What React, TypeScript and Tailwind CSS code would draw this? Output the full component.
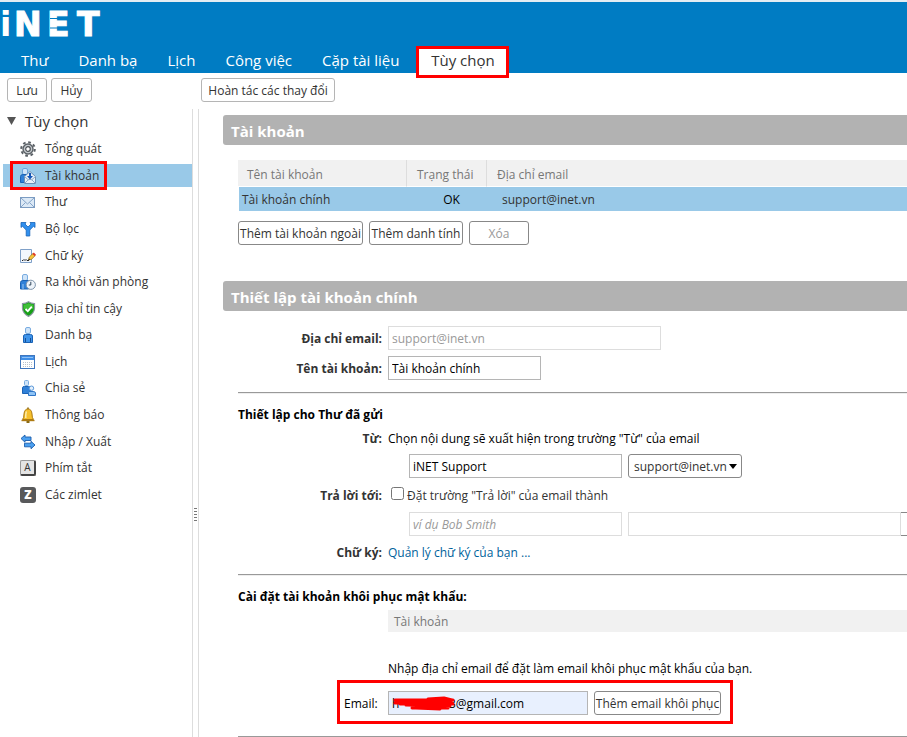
import type { ReactNode } from 'react';

type NavItem = { label: string; icon: ReactNode; selected?: boolean };

const TABS = ['Thư', 'Danh bạ', 'Lịch', 'Công việc', 'Cặp tài liệu'];

const BTN = 'h-6 rounded-[3px] border bg-white pt-px whitespace-nowrap';
const INPUT = 'h-6 border bg-white px-[3px] pt-px text-black';

function Icon({ children }: { children: ReactNode }) {
  return (
    <svg width="16" height="16" viewBox="0 0 16 16" className="shrink-0" aria-hidden="true">
      {children}
    </svg>
  );
}

const GearIcon = (
  <Icon>
    <circle cx="8" cy="8" r="6.8" fill="none" stroke="#5a6066" strokeWidth="2" strokeDasharray="2.67 2.67" />
    <circle cx="8" cy="8" r="5" fill="#c3c8cc" stroke="#5b6166" strokeWidth="1.4" />
    <circle cx="8" cy="8" r="2.3" fill="#fff" stroke="#4c5156" strokeWidth="1.2" />
  </Icon>
);

const AccountIcon = (
  <Icon>
    <rect x="2.5" y="0.5" width="5" height="6" rx="1.5" fill="#cfe4f8" stroke="#6aa3dc" />
    <path d="M0.5 14.5V8.5Q0.5 6.5 3 6.5H8V14.5Z" fill="#2f80d8" stroke="#1b62b4" />
    <path d="M4.5 8.5L10 3.5L15.5 8.5V15.5H4.5Z" fill="#e8f0f8" stroke="#6d8fb5" />
    <path d="M4.5 15.5L8.5 11.5H11.5L15.5 15.5M4.5 8.5L8.5 12M15.5 8.5L11.5 12" fill="none" stroke="#8fa9c6" />
    <path d="M9 5H11V8H13L10 11.5L7 8H9Z" fill="#1557b8" />
  </Icon>
);

const MailIcon = (
  <Icon>
    <rect x="0.5" y="3.5" width="14" height="10" fill="#dce9f6" stroke="#7c9cc2" />
    <path d="M1 4L7.5 10L14 4M1 13L5.5 8.5M14 13L9.5 8.5" fill="none" stroke="#86a5c9" />
  </Icon>
);

const FilterIcon = (
  <Icon>
    <path d="M1 1.5H6L5 3L8 6L11 3L10 1.5H15V6.5L13.5 5.2L9.8 9V15H6.2V9L2.5 5.2L1 6.5Z" fill="#3190ee" stroke="#1763b8" strokeWidth="0.8" />
  </Icon>
);

const SignatureIcon = (
  <Icon>
    <path d="M0.5 1.5H11.5V14.5H0.5Z" fill="#f2f7fd" stroke="#7fa0c8" />
    <path d="M2 12.5H3L4 11.5L5 12.5L6 11.5L7 12.5H9" fill="none" stroke="#222" />
    <path d="M8.5 12L9.3 9L13 5.3L15.3 7.5L11.6 11.2Z" fill="#f7c63a" stroke="#8a6516" strokeWidth="0.7" />
    <path d="M12.4 6L13.8 4.6L16 6.7L14.6 8.1Z" fill="#e03a2a" />
    <path d="M8.4 12.2L8.9 10.5L10.1 11.6Z" fill="#222" />
  </Icon>
);

const OutOfOfficeIcon = (
  <Icon>
    <rect x="2.5" y="0.5" width="5" height="6" rx="1.5" fill="#cfe4f8" stroke="#79ace0" />
    <path d="M0.5 15V8.5Q0.5 6.5 3 6.5H8.5V15Z" fill="#2f80d8" stroke="#1b62b4" />
    <path d="M3 10V15" stroke="#9cc9f5" />
    <circle cx="10.8" cy="10.8" r="4.6" fill="#eef4fa" stroke="#7d93aa" />
    <path d="M10.8 7.8V11H8.8" fill="none" stroke="#34495e" />
  </Icon>
);

const ShieldIcon = (
  <Icon>
    <path d="M8.5 0.8Q11 2.6 14.5 2.6V7.5Q14 12.6 8.5 15.4Q3 12.6 2.5 7.5V2.6Q6 2.6 8.5 0.8Z" fill="#16a016" stroke="#8b97a3" strokeWidth="1.2" />
    <path d="M8.5 2.2Q11 3.6 13.3 3.7V8H3.7V3.7Q6 3.6 8.5 2.2Z" fill="#3fbf38" />
    <path d="M5.5 8L7.8 10.2L11.8 5.6" fill="none" stroke="#fff" strokeWidth="1.8" />
  </Icon>
);

const PersonIcon = (
  <Icon>
    <rect x="5.5" y="0.5" width="5" height="6" rx="1.5" fill="#cfe4f8" stroke="#79ace0" />
    <path d="M3.5 15.5V9Q3.5 7.5 5.5 7.5H10.5Q12.5 7.5 12.5 9V15.5Z" fill="#3d93ea" stroke="#1b62b4" />
    <path d="M5.5 11V15M10.5 11V15" stroke="#174f94" />
  </Icon>
);

const CalendarIcon = (
  <Icon>
    <rect x="0.5" y="1.5" width="14" height="13" fill="#fff" stroke="#3f76bd" />
    <rect x="1" y="2" width="13" height="4" fill="#3f8ee6" />
    <path d="M2 3.5H13" stroke="#8fc1f6" />
    <path d="M3 8.5H13M3 10.5H13M3 12.5H13" stroke="#b9c2cc" strokeDasharray="1 1" />
  </Icon>
);

const ShareIcon = (
  <Icon>
    <rect x="4.5" y="0.5" width="4" height="5" rx="1" fill="#cfe4f8" stroke="#79ace0" />
    <path d="M2.5 13.5V7.5Q2.5 6.5 4.5 6.5H8.5Q10.5 6.5 10.5 8V13.5Z" fill="#2f80d8" stroke="#1b62b4" />
    <circle cx="11.5" cy="8.2" r="2.2" fill="#e4f0fb" stroke="#5b98da" />
    <path d="M8.5 15.5V12.5Q8.5 11.5 10 11.5H13Q15.5 11.5 15.5 13V15.5Z" fill="#8fc4f6" stroke="#2e75c6" />
  </Icon>
);

const BellIcon = (
  <Icon>
    <path d="M8 0.5V2" stroke="#8a6a14" strokeWidth="1.6" />
    <path d="M2.5 12.5Q4 11 4 7Q4.4 2 8 2Q11.6 2 12 7Q12 11 13.5 12.5Z" fill="#f6c02c" stroke="#ad7a12" />
    <path d="M6.5 4.5Q5.6 6 5.8 11" fill="none" stroke="#fdf0b4" strokeWidth="1.4" />
    <path d="M1.5 13.5H14.5" stroke="#ad7a12" strokeWidth="1.4" />
    <rect x="6.5" y="14" width="3" height="2" fill="#8a6a14" />
  </Icon>
);

const ImportExportIcon = (
  <Icon>
    <path d="M1 4.5L5 1V3H11V6.5H5V8.2Z" fill="#4ba0f0" stroke="#1a5cab" strokeWidth="0.9" />
    <path d="M15 11L11 7.3V9.2H4.5V12.8H11V14.8Z" fill="#4ba0f0" stroke="#1a5cab" strokeWidth="0.9" />
  </Icon>
);

const NAV: NavItem[] = [
  { label: 'Tổng quát', icon: GearIcon },
  { label: 'Tài khoản', icon: AccountIcon, selected: true },
  { label: 'Thư', icon: MailIcon },
  { label: 'Bộ lọc', icon: FilterIcon },
  { label: 'Chữ ký', icon: SignatureIcon },
  { label: 'Ra khỏi văn phòng', icon: OutOfOfficeIcon },
  { label: 'Địa chỉ tin cậy', icon: ShieldIcon },
  { label: 'Danh bạ', icon: PersonIcon },
  { label: 'Lịch', icon: CalendarIcon },
  { label: 'Chia sẻ', icon: ShareIcon },
  { label: 'Thông báo', icon: BellIcon },
  { label: 'Nhập / Xuất', icon: ImportExportIcon },
  {
    label: 'Phím tắt',
    icon: (
      <span className="flex h-4 w-4 items-start justify-center rounded-[2px] border border-r-2 border-b-2 border-[#999] border-r-[#444] border-b-[#444] bg-[#e4e4e4] text-[10px] leading-3 text-[#333]">
        A
      </span>
    ),
  },
  {
    label: 'Các zimlet',
    icon: (
      <span className="flex h-4 w-4 items-center justify-center rounded-[3px] bg-[#58595b] text-[12px] leading-4 font-extrabold text-white">
        Z
      </span>
    ),
  },
];

export default function App() {
  return (
    <div className="flex h-screen flex-col overflow-hidden bg-white font-['Open_Sans','Noto_Sans',sans-serif] text-[12px] leading-4 text-[#333]">
      <Header />
      <div className="flex h-9 shrink-0 items-start pt-[5px] pl-[7px]">
        <div className="flex w-[194px] gap-1">
          <button className={`${BTN} w-10 border-[#b5b5b5]`}>Lưu</button>
          <button className={`${BTN} w-[41px] border-[#b5b5b5]`}>Hủy</button>
        </div>
        <button className={`${BTN} w-[134px] border-[#b5b5b5]`}>Hoàn tác các thay đổi</button>
      </div>
      <div className="flex min-h-0 flex-1">
        <Sidebar />
        {/* Resize handle */}
        <div className="flex w-[7px] shrink-0 flex-col items-center border-x border-[#ddd] pt-[399px]">
          <div className="flex flex-col gap-[2px]">
            <span className="h-px w-[3px] bg-[#777]" />
            <span className="h-px w-[3px] bg-[#777]" />
            <span className="h-px w-[3px] bg-[#777]" />
            <span className="h-px w-[3px] bg-[#777]" />
            <span className="h-px w-[3px] bg-[#777]" />
          </div>
        </div>
        <main className="min-w-0 flex-1 overflow-hidden pt-[6px] pl-6">
          <SectionTitle>Tài khoản</SectionTitle>
          <Accounts />
          <SectionTitle>Thiết lập tài khoản chính</SectionTitle>
          <AccountForm />
        </main>
      </div>
    </div>
  );
}

function Header() {
  return (
    <header className="shrink-0 border-t-2 border-[#e3edf3] bg-[#007cc3]">
      <div className="flex h-11 items-center">
        <Logo />
      </div>
      <nav className="flex h-[27px] items-center pl-[21px] text-[15px] leading-5 text-white">
        <div className="flex gap-[30px]">
          {TABS.map((tab) => (
            <a key={tab} href="#" className="whitespace-nowrap">
              {tab}
            </a>
          ))}
        </div>
        <a
          href="#"
          className="relative ml-[17px] flex h-[27px] w-[93px] items-center justify-center bg-white whitespace-nowrap text-[#333]"
        >
          Tùy chọn
          <span className="absolute inset-x-0 top-0 h-8 border-3 border-[#f00]" />
        </a>
      </nav>
    </header>
  );
}

function Logo() {
  return (
    <svg width="110" height="44" viewBox="0 0 110 44" role="img" aria-label="iNET">
      <text y="34" fill="#fff" fontFamily="DejaVu Sans" fontWeight="700" fontSize="33">
        <tspan x="0">i</tspan>
        <tspan x="14" stroke="#fff">N</tspan>
        <tspan x="47" stroke="#fff">E</tspan>
        <tspan x="77" stroke="#fff">T</tspan>
      </text>
      <path d="M50 16.5H60M50 26H60" stroke="#007cc3" />
    </svg>
  );
}

function Sidebar() {
  return (
    <aside className="w-48 shrink-0 pt-px">
      <div className="flex h-[26px] items-center gap-[9px] pb-1 pl-[7px] text-[15px] leading-5">
        <svg width="9" height="8" viewBox="0 0 9 8" aria-hidden="true">
          <path d="M0 0H9L4.5 8Z" fill="#555" />
        </svg>
        Tùy chọn
      </div>
      <ul className="grid h-[372px] auto-rows-fr items-center pl-[3px]">
        {NAV.map((item) => (
          <li key={item.label} className={item.selected ? 'relative bg-[#99c9e8]' : ''}>
            <a href="#" className="flex h-[23px] items-center gap-[9px] pl-[17px]">
              {item.icon}
              {item.label}
            </a>
            {item.selected && <span className="absolute -top-[3px] left-[7px] h-[29px] w-[97px] border-3 border-[#f00]" />}
          </li>
        ))}
      </ul>
    </aside>
  );
}

function SectionTitle({ children }: { children: ReactNode }) {
  return (
    <h2 className="flex h-[30px] items-center rounded-l-[3px] bg-[#b2b2b2] pt-[2px] pl-2 text-[15px] leading-5 font-bold text-white">
      {children}
    </h2>
  );
}

function Accounts() {
  return (
    <div className="pt-[15px] pb-9 pl-[15px]">
      <table className="w-full table-fixed border-separate border-spacing-0">
        <thead>
          <tr className="h-[27px] bg-[#f1f1f1] text-left text-[#777]">
            <th className="w-[169px] border-r border-b border-r-[#ddd] border-b-white pt-[3px] pl-[9px] font-normal">Tên tài khoản</th>
            <th className="w-20 border-r border-b border-r-[#ddd] border-b-white pt-[3px] pl-[10px] font-normal">Trạng thái</th>
            <th className="border-b border-white pt-[3px] pl-[10px] font-normal">Địa chỉ email</th>
          </tr>
        </thead>
        <tbody>
          <tr className="h-6 bg-[#99c9e8]">
            <td className="border-l border-white pt-[2px] pl-[3px]">Tài khoản chính</td>
            <td className="pt-[2px] pl-[9px] text-center text-black">OK</td>
            <td className="pt-[2px] pl-[15px]">support@inet.vn</td>
          </tr>
        </tbody>
      </table>
      <div className="mt-[10px] flex gap-[6px]">
        <button className={`${BTN} w-[125px] border-[#888]`}>Thêm tài khoản ngoài</button>
        <button className={`${BTN} w-[94px] border-[#888]`}>Thêm danh tính</button>
        <button className={`${BTN} w-[60px] border-[#888] text-[#999]`} disabled>
          Xóa
        </button>
      </div>
    </div>
  );
}

function Row({ label, htmlFor, children }: { label?: string; htmlFor?: string; children: ReactNode }) {
  return (
    <div className="grid grid-cols-[144px_1fr] items-center gap-x-[6px]">
      <label htmlFor={htmlFor} className="pt-px text-right font-bold whitespace-nowrap">
        {label}
      </label>
      <div className="flex min-w-0 items-center">{children}</div>
    </div>
  );
}

function Rule() {
  return <hr className="h-[2px] border-t border-b border-t-[#999] border-b-[#eee]" />;
}

function AccountForm() {
  return (
    <form className="pt-[15px] pl-[15px]">
      <div className="flex flex-col gap-[6px] pb-3">
        <Row label="Địa chỉ email:" htmlFor="address">
          <input id="address" disabled defaultValue="support@inet.vn" className={`${INPUT} w-[273px] border-[#ddd] text-[#999]!`} />
        </Row>
        <Row label="Tên tài khoản:" htmlFor="name">
          <input id="name" defaultValue="Tài khoản chính" className={`${INPUT} w-[153px] border-[#b5b5b5]`} />
        </Row>
      </div>
      <Rule />

      <h3 className="pt-[13px] pb-[7px] font-bold text-black">Thiết lập cho Thư đã gửi</h3>
      <Row label="Từ:" htmlFor="from">
        <span className="pt-px whitespace-nowrap text-black">Chọn nội dung sẽ xuất hiện trong trường "Từ" của email</span>
      </Row>
      <div className="flex gap-[6px] pt-[7px] pb-[9px] pl-[171px]">
        <input id="from" defaultValue="iNET Support" className={`${INPUT} w-[213px] border-[#b5b5b5]`} />
        <div className="relative">
          <select aria-label="Địa chỉ gửi" className={`${BTN} w-[114px] appearance-none border-[#888] pl-[5px]`}>
            <option>support@inet.vn</option>
          </select>
          <svg width="8" height="5" viewBox="0 0 8 5" className="pointer-events-none absolute top-[10px] right-[5px]" aria-hidden="true">
            <path d="M0 0H8L4 5Z" fill="#000" />
          </svg>
        </div>
      </div>
      <Row label="Trả lời tới:" htmlFor="reply">
        <input id="reply" type="checkbox" className="mb-1 ml-[3px] h-[13px] w-[13px]" />
        <label htmlFor="reply" className="ml-[3px] pt-px whitespace-nowrap">
          Đặt trường "Trả lời" của email thành
        </label>
      </Row>
      <div className="flex overflow-hidden pt-2 pb-2 pl-[171px]">
        <input aria-label="Tên trả lời" disabled placeholder="ví dụ Bob Smith" className={`${INPUT} mr-[6px] w-[213px] shrink-0 border-[#ddd] placeholder:text-[#999] placeholder:italic`} />
        <input aria-label="Địa chỉ trả lời" disabled className={`${INPUT} w-[273px] shrink-0 border-[#ddd]`} />
        <button type="button" aria-label="Chọn địa chỉ" className="h-6 w-5 shrink-0 border-y border-[#888] bg-white" />
      </div>
      <Row label="Chữ ký:">
        <a href="#" className="pt-px text-[#00629b]">
          Quản lý chữ ký của bạn ...
        </a>
      </Row>
      <div className="pt-[13px]">
        <Rule />
      </div>

      <h3 className="pt-[13px] pb-[5px] font-bold text-black">Cài đặt tài khoản khôi phục mật khẩu:</h3>
      <div className="ml-[150px] flex h-[22px] items-center bg-[#f1f1f1] pt-[2px] pl-[6px] text-[#777]">Tài khoản</div>
      <p className="pt-[29px] pl-[150px] whitespace-nowrap text-black">
        Nhập địa chỉ email để đặt làm email khôi phục mật khẩu của bạn.
      </p>
      {/* Recovery email */}
      <div className="mt-[3px] ml-[99px] flex h-11 w-[396px] items-center border-3 border-[#f00] pt-[2px] pl-1 text-black">
        <label htmlFor="recovery" className="w-11 pt-px">
          Email:
        </label>
        <div className="relative mr-[6px]">
          <input id="recovery" defaultValue="h•••••••••••3@gmail.com" className={`${INPUT} w-[200px] border-[#b5b5b5] bg-[#e8f0fe]!`} />
          <svg width="66" height="16" viewBox="0 0 66 16" className="absolute top-1 left-1" aria-hidden="true">
            <path d="M3 5H38L61 5M3 8H60L8 9L61 9M14 10L58 11L20 13L56 13M36 4L52 3L60 5M24 13L48 14" fill="none" stroke="#f00" strokeWidth="3" strokeLinecap="round" strokeLinejoin="round" />
          </svg>
        </div>
        <button type="button" className={`${BTN} w-[127px] border-[#888] text-[#333]`}>
          Thêm email khôi phục
        </button>
      </div>
      <div className="pt-3">
        <Rule />
      </div>
    </form>
  );
}
